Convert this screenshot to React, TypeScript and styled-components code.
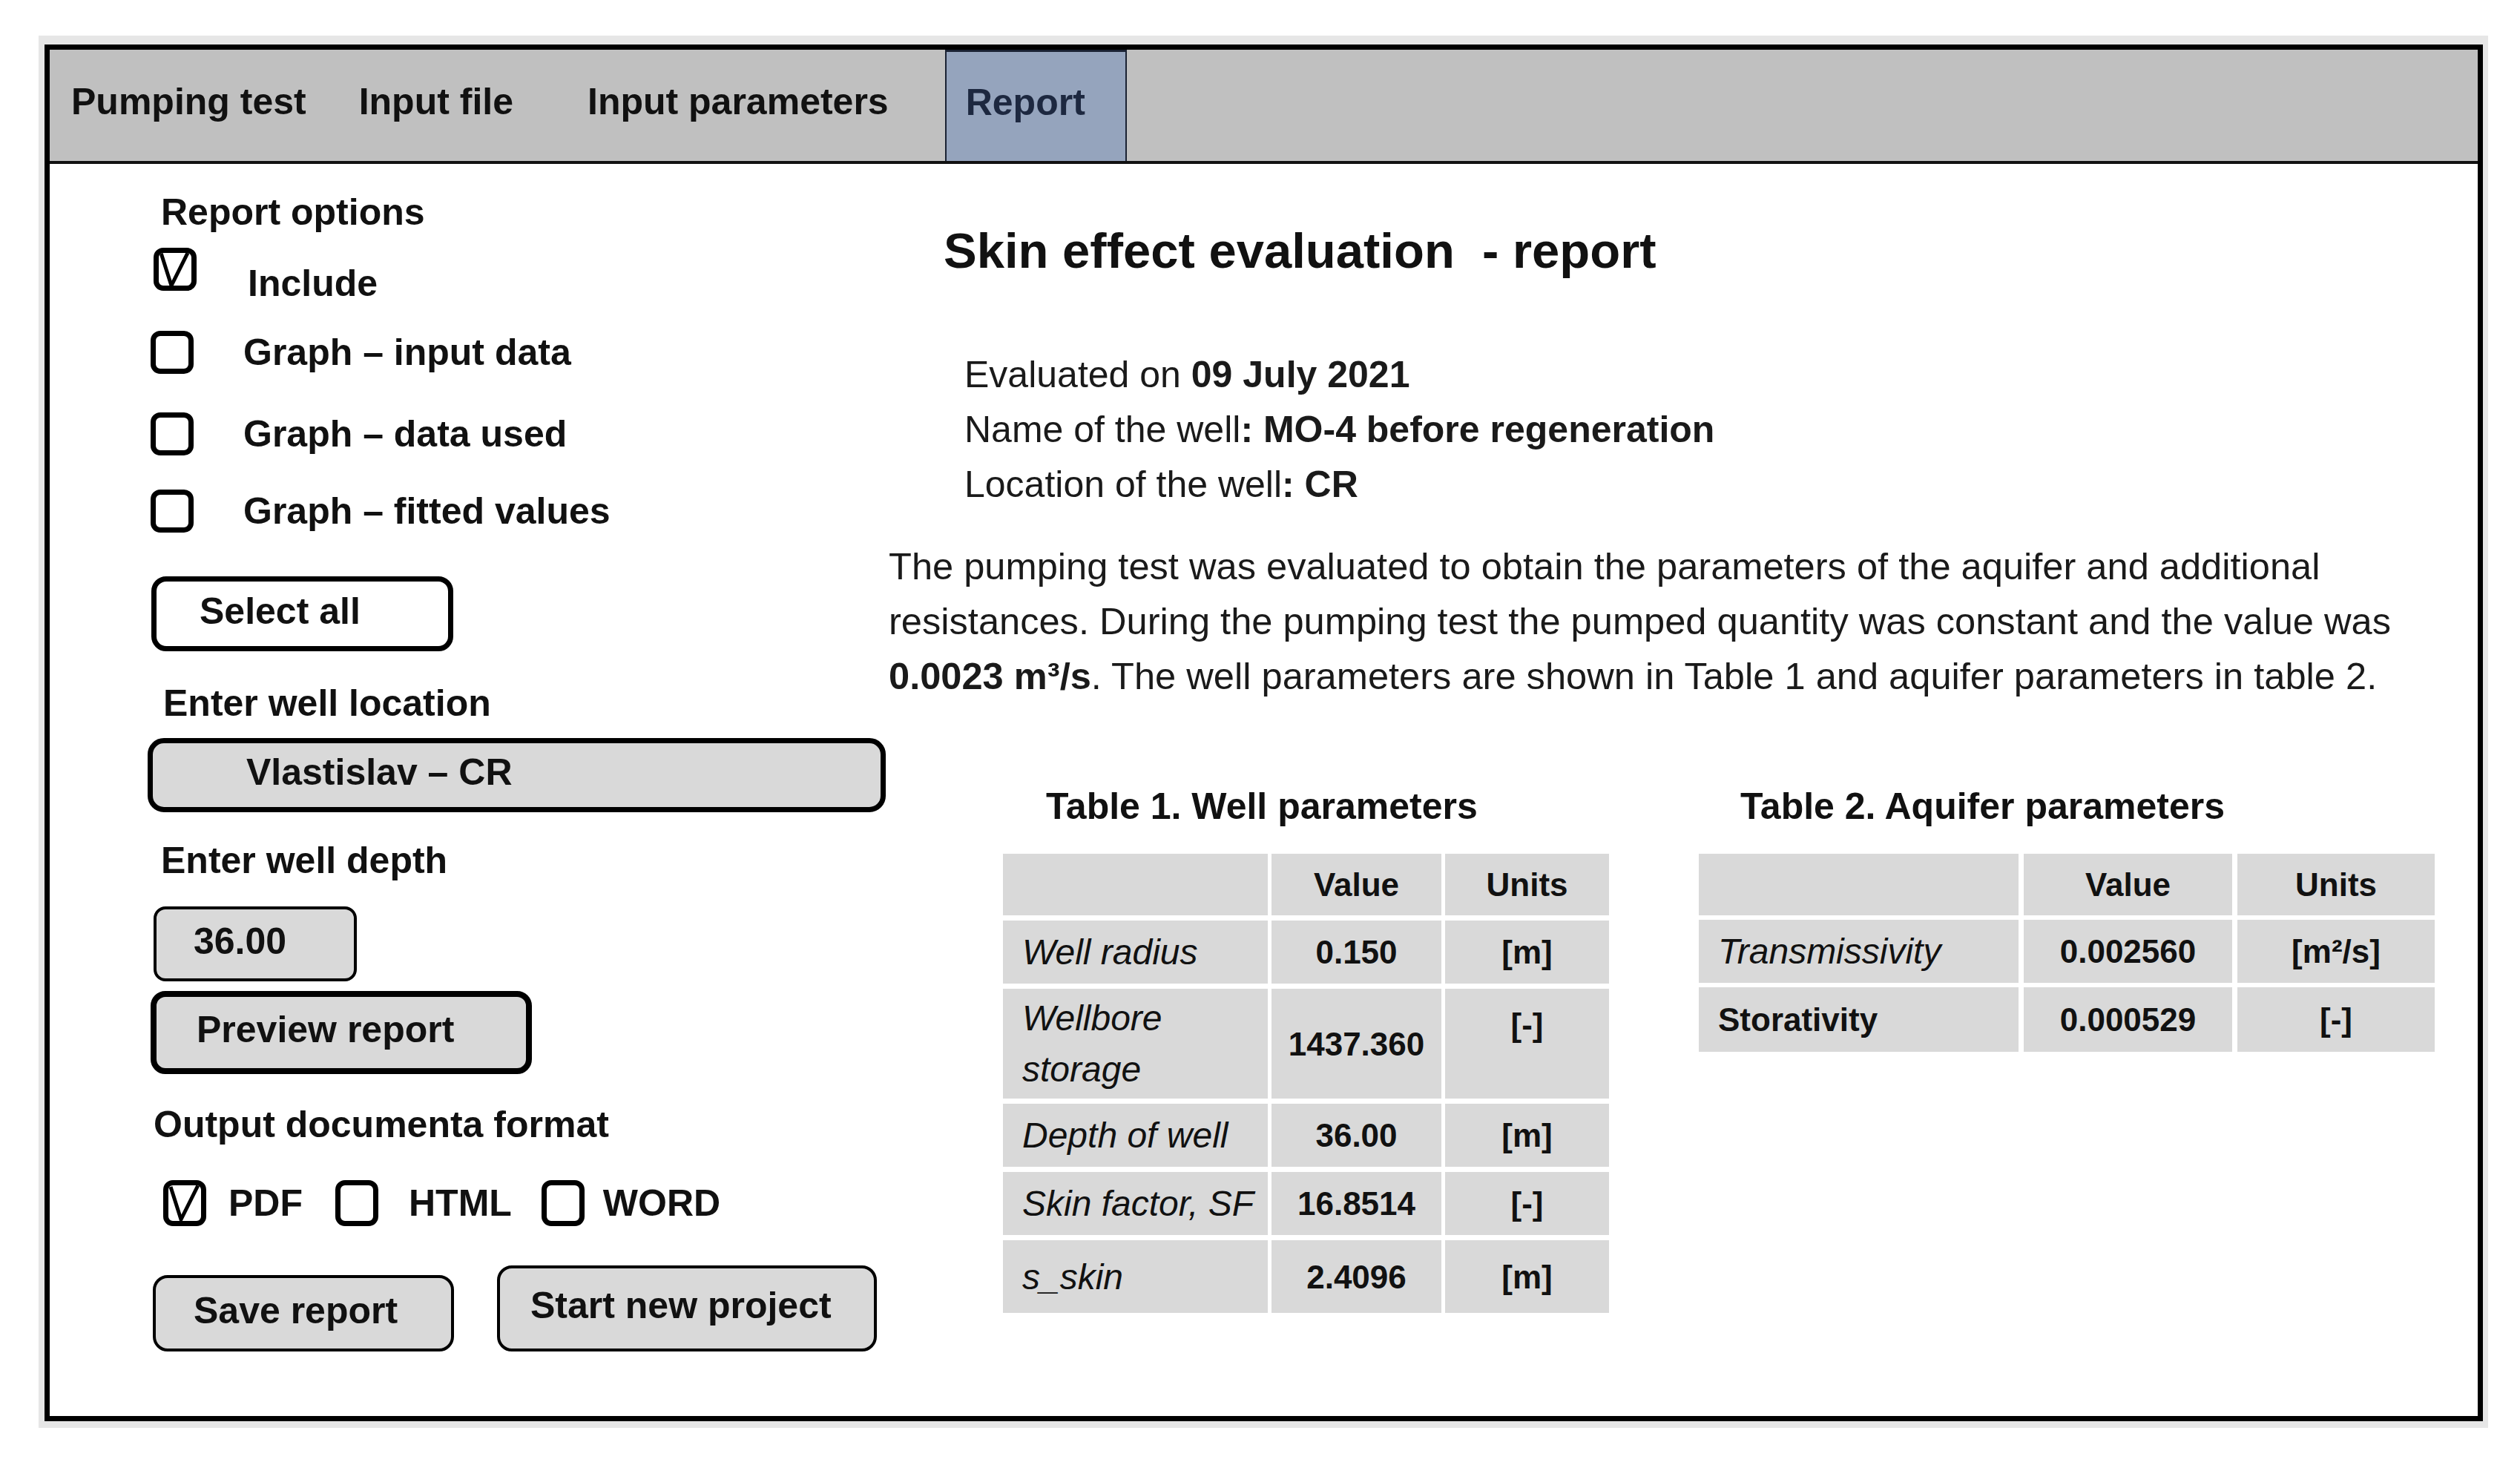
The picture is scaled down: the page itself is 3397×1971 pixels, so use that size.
import React from "react";
import styled, { createGlobalStyle } from "styled-components";

const GlobalStyle = createGlobalStyle`
    body {
        margin: 0;
        background: #ffffff;
        font-family: "Liberation Sans", Arial, sans-serif;
        color: #000;
    }
`;

const Shadow = styled.div`
    margin: 48px 0 0 52px;
    width: 3302px;
    padding: 12px 7px 9px 8px;
    box-sizing: border-box;
    background: #e6e6e6;
`;

const Frame = styled.div`
    height: 1856px;
    box-sizing: border-box;
    border: 7px solid #000;
    background: #fff;
    display: flex;
    flex-direction: column;
`;

const TabBar = styled.div`
    height: 154px;
    box-sizing: border-box;
    background: #c0c0c0;
    border-bottom: 4px solid #111;
    display: flex;
    align-items: stretch;
`;

const Tab = styled.div<{ $ml: number; $active?: boolean }>`
    margin-left: ${({ $ml }) => $ml}px;
    display: flex;
    align-items: center;
    padding: ${({ $active }) => ($active ? "0 54px 12px 26px" : "0 0 10px 0")};
    font-size: 50px;
    font-weight: bold;
    color: ${({ $active }) => ($active ? "#1d2840" : "#111")};
    background: ${({ $active }) => ($active ? "#95a4bd" : "transparent")};
    border-left: ${({ $active }) => ($active ? "2px solid #1a2233" : "none")};
    border-right: ${({ $active }) => ($active ? "2px solid #1a2233" : "none")};
    border-top: ${({ $active }) => ($active ? "3px solid #1a2233" : "none")};
`;

const Content = styled.div`
    flex: 1;
    display: flex;
    flex-direction: row;
`;

const LeftPanel = styled.div`
    width: 1131px;
    flex-shrink: 0;
    box-sizing: border-box;
    padding: 36px 0 0 136px;
    display: flex;
    flex-direction: column;
    align-items: flex-start;
`;

const Label = styled.div<{ $ml?: number; $mt?: number }>`
    margin-left: ${({ $ml }) => $ml ?? 0}px;
    margin-top: ${({ $mt }) => $mt ?? 0}px;
    font-size: 50px;
    font-weight: bold;
    line-height: 58px;
    color: #111;
    white-space: nowrap;
`;

const CheckRow = styled.div<{ $mt: number; $top?: boolean }>`
    margin-top: ${({ $mt }) => $mt}px;
    display: flex;
    align-items: ${({ $top }) => ($top ? "flex-start" : "center")};
`;

const Box = styled.div<{ $ml?: number; $h?: number }>`
    margin-left: ${({ $ml }) => $ml ?? 0}px;
    width: 58px;
    height: ${({ $h }) => $h ?? 58}px;
    box-sizing: border-box;
    border: 7px solid #000;
    border-radius: 13px;
    display: flex;
    align-items: center;
    justify-content: center;
    overflow: hidden;
    flex-shrink: 0;
`;

const CheckText = styled.div<{ $gap: number; $drop?: number }>`
    margin-left: ${({ $gap }) => $gap}px;
    margin-top: ${({ $drop }) => $drop ?? 0}px;
    font-size: 50px;
    font-weight: bold;
    line-height: 58px;
    color: #111;
    white-space: nowrap;
`;

const ActionButton = styled.button<{
    $w: number;
    $h: number;
    $border: number;
    $pad: number;
    $light?: boolean;
    $ml?: number;
    $mt?: number;
}>`
    width: ${({ $w }) => $w}px;
    height: ${({ $h }) => $h}px;
    margin-left: ${({ $ml }) => $ml ?? 0}px;
    margin-top: ${({ $mt }) => $mt ?? 0}px;
    box-sizing: border-box;
    border: ${({ $border }) => $border}px solid #000;
    border-radius: 20px;
    background: ${({ $light }) => ($light ? "#ffffff" : "#d9d9d9")};
    padding: 0 0 8px ${({ $pad }) => $pad}px;
    text-align: left;
    font-family: "Liberation Sans", Arial, sans-serif;
    font-size: 50px;
    font-weight: bold;
    color: #111;
    cursor: pointer;
    white-space: nowrap;
`;

const Field = styled.input<{ $w: number; $h: number; $border: number; $pad: number; $ml?: number; $mt: number; $radius: number }>`
    width: ${({ $w }) => $w}px;
    height: ${({ $h }) => $h}px;
    margin: ${({ $mt }) => $mt}px 0 0 ${({ $ml }) => $ml ?? 0}px;
    box-sizing: border-box;
    border: ${({ $border }) => $border}px solid #000;
    border-radius: ${({ $radius }) => $radius}px;
    background: #d9d9d9;
    padding: 0 0 8px ${({ $pad }) => $pad}px;
    font-family: "Liberation Sans", Arial, sans-serif;
    font-size: 50px;
    font-weight: bold;
    color: #111;
    outline: none;
`;

const ButtonRow = styled.div<{ $mt: number }>`
    margin-top: ${({ $mt }) => $mt}px;
    display: flex;
    align-items: flex-end;
    gap: 58px;
    margin-left: 3px;
`;

const RightPanel = styled.div`
    flex: 1;
    padding-top: 78px;
    display: flex;
    flex-direction: column;
    align-items: flex-start;
`;

const Title = styled.h1`
    margin: 0 0 0 74px;
    font-size: 67px;
    font-weight: bold;
    line-height: 78px;
    white-space: pre;
    color: #111;
`;

const InfoBlock = styled.div`
    margin: 91px 0 0 102px;
    font-size: 50px;
    line-height: 74px;
    color: #1a1a1a;
    white-space: nowrap;
`;

const Paragraph = styled.p`
    margin: 37px 0 0 0;
    font-size: 50.6px;
    line-height: 74px;
    color: #1a1a1a;
    white-space: nowrap;
`;

const TablesRow = styled.div`
    margin: 109px 0 0 154px;
    display: flex;
    gap: 121px;
    align-items: flex-start;
`;

const TableGroup = styled.div`
    display: flex;
    flex-direction: column;
`;

const TableTitle = styled.div<{ $ml: number }>`
    margin-left: ${({ $ml }) => $ml}px;
    font-size: 50px;
    font-weight: bold;
    line-height: 58px;
    color: #111;
    white-space: nowrap;
`;

const Grid = styled.div<{ $cols: string; $rows: string; $colGap: number; $rowGap: number }>`
    margin-top: 35px;
    display: grid;
    grid-template-columns: ${({ $cols }) => $cols};
    grid-template-rows: ${({ $rows }) => $rows};
    column-gap: ${({ $colGap }) => $colGap}px;
    row-gap: ${({ $rowGap }) => $rowGap}px;
`;

const Cell = styled.div<{ $kind: "head" | "label" | "plain" | "value"; $top?: boolean }>`
    background: #d9d9d9;
    display: flex;
    align-items: ${({ $top }) => ($top ? "flex-start" : "center")};
    justify-content: ${({ $kind }) => ($kind === "label" || $kind === "plain" ? "flex-start" : "center")};
    padding: ${({ $kind, $top }) => ($kind === "label" || $kind === "plain" ? "0 0 0 26px" : $top ? "14px 0 0 0" : "0")};
    font-size: ${({ $kind }) => ($kind === "label" ? 48 : 44)}px;
    font-style: ${({ $kind }) => ($kind === "label" ? "italic" : "normal")};
    font-weight: ${({ $kind }) => ($kind === "label" ? "normal" : "bold")};
    line-height: 69px;
    color: #111;
`;

function CheckMark() {
    return (
        <svg width="44" height="48" viewBox="0 0 44 48">
            <path d="M3 2 L17 46 L40 0" fill="none" stroke="#000" strokeWidth="5" strokeLinejoin="miter" />
        </svg>
    );
}

type Row = { label: React.ReactNode; value: string; unit: string; kind?: "label" | "plain"; unitTop?: boolean };

const wellRows: Row[] = [
    { label: "Well radius", value: "0.150", unit: "[m]" },
    { label: <span>Wellbore<br />storage</span>, value: "1437.360", unit: "[-]", unitTop: true },
    { label: "Depth of well", value: "36.00", unit: "[m]" },
    { label: "Skin factor, SF", value: "16.8514", unit: "[-]" },
    { label: "s_skin", value: "2.4096", unit: "[m]" },
];

const aquiferRows: Row[] = [
    { label: "Transmissivity", value: "0.002560", unit: "[m²/s]" },
    { label: "Storativity", value: "0.000529", unit: "[-]", kind: "plain" },
];

function ParamTable({ rows, cols, heights, colGap, rowGap }: { rows: Row[]; cols: string; heights: string; colGap: number; rowGap: number }) {
    return (
        <Grid $cols={cols} $rows={heights} $colGap={colGap} $rowGap={rowGap}>
            <Cell $kind="head" />
            <Cell $kind="head">Value</Cell>
            <Cell $kind="head">Units</Cell>
            {rows.map((r, i) => (
                <React.Fragment key={i}>
                    <Cell $kind={r.kind ?? "label"}>{r.label}</Cell>
                    <Cell $kind="value">{r.value}</Cell>
                    <Cell $kind="value" $top={r.unitTop}>{r.unit}</Cell>
                </React.Fragment>
            ))}
        </Grid>
    );
}

export default function App() {
    return (
        <>
            <GlobalStyle />
            <Shadow>
                <Frame>
                    <TabBar>
                        <Tab $ml={29}>Pumping test</Tab>
                        <Tab $ml={71}>Input file</Tab>
                        <Tab $ml={100}>Input parameters</Tab>
                        <Tab $ml={76} $active>Report</Tab>
                    </TabBar>
                    <Content>
                        <LeftPanel>
                            <Label $ml={14}>Report options</Label>
                            <CheckRow $mt={19} $top>
                                <Box $ml={4}><CheckMark /></Box>
                                <CheckText $gap={69} $drop={19}>Include</CheckText>
                            </CheckRow>
                            <CheckRow $mt={35}>
                                <Box />
                                <CheckText $gap={67}>Graph – input data</CheckText>
                            </CheckRow>
                            <CheckRow $mt={52}>
                                <Box />
                                <CheckText $gap={67}>Graph – data used</CheckText>
                            </CheckRow>
                            <CheckRow $mt={46}>
                                <Box />
                                <CheckText $gap={67}>Graph – fitted values</CheckText>
                            </CheckRow>
                            <ActionButton $w={407} $h={101} $border={7} $pad={58} $light $ml={1} $mt={59}>Select all</ActionButton>
                            <Label $ml={17} $mt={41}>Enter well location</Label>
                            <Field readOnly defaultValue="Vlastislav – CR" $w={995} $h={100} $border={7} $pad={126} $ml={-4} $mt={18} $radius={22} />
                            <Label $ml={14} $mt={36}>Enter well depth</Label>
                            <Field readOnly defaultValue="36.00" $w={274} $h={101} $border={4} $pad={50} $ml={4} $mt={33} $radius={16} />
                            <ActionButton $w={514} $h={112} $border={8} $pad={54} $mt={13}>Preview report</ActionButton>
                            <Label $ml={4} $mt={39}>Output documenta format</Label>
                            <CheckRow $mt={46}>
                                <Box $ml={17} $h={62}><CheckMark /></Box>
                                <CheckText $gap={30}>PDF</CheckText>
                                <Box $ml={44} $h={62} />
                                <CheckText $gap={41}>HTML</CheckText>
                                <Box $ml={40} $h={62} />
                                <CheckText $gap={25}>WORD</CheckText>
                            </CheckRow>
                            <ButtonRow $mt={53}>
                                <ActionButton $w={406} $h={103} $border={4} $pad={51}>Save report</ActionButton>
                                <ActionButton $w={512} $h={116} $border={4} $pad={41}>Start new project</ActionButton>
                            </ButtonRow>
                        </LeftPanel>
                        <RightPanel>
                            <Title>{"Skin effect evaluation  - report"}</Title>
                            <InfoBlock>
                                Evaluated on <b>09 July 2021</b>
                                <br />
                                Name of the well<b>: MO-4 before regeneration</b>
                                <br />
                                Location of the well<b>: CR</b>
                            </InfoBlock>
                            <Paragraph>
                                The pumping test was evaluated to obtain the parameters of the aquifer and additional
                                <br />
                                resistances. During the pumping test the pumped quantity was constant and the value was
                                <br />
                                <b>0.0023 m³/s</b>. The well parameters are shown in Table 1 and aquifer parameters in table 2.
                            </Paragraph>
                            <TablesRow>
                                <TableGroup>
                                    <TableTitle $ml={58}>Table 1. Well parameters</TableTitle>
                                    <ParamTable
                                        rows={wellRows}
                                        cols="357px 229px 221px"
                                        heights="83px 85px 148px 85px 85px 98px"
                                        colGap={5}
                                        rowGap={7}
                                    />
                                </TableGroup>
                                <TableGroup>
                                    <TableTitle $ml={56}>Table 2. Aquifer parameters</TableTitle>
                                    <ParamTable
                                        rows={aquiferRows}
                                        cols="431px 281px 266px"
                                        heights="83px 85px 87px"
                                        colGap={7}
                                        rowGap={6}
                                    />
                                </TableGroup>
                            </TablesRow>
                        </RightPanel>
                    </Content>
                </Frame>
            </Shadow>
        </>
    );
}
